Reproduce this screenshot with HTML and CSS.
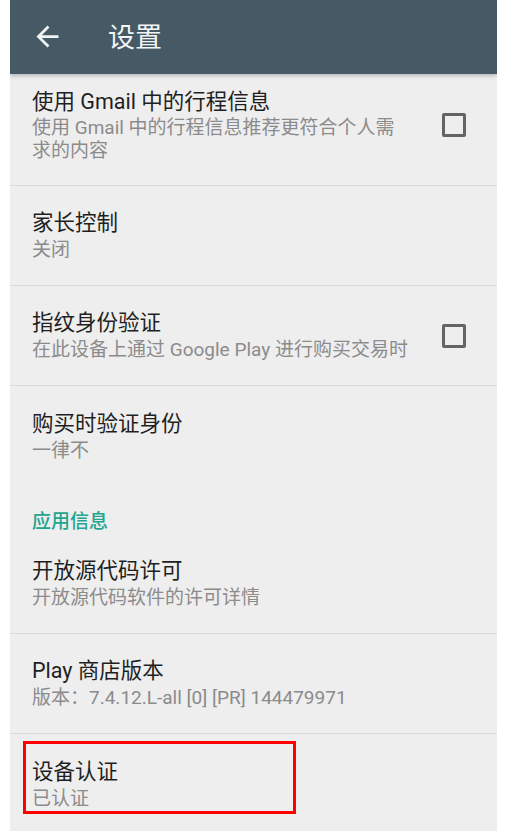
FILE: index.html
```html
<!DOCTYPE html>
<html lang="zh-CN">
<head>
<meta charset="utf-8">
<title>设置</title>
<link rel="stylesheet" href="styles.css">
</head>
<body>
<div class="phone">
  <header class="toolbar">
    <svg class="back" viewBox="0 0 24 24" width="33" height="33"><path d="M20 11H7.83l5.59-5.59L12 4l-8 8 8 8 1.41-1.41L7.83 13H20v-2z" fill="#f2f4f5"/></svg>
    <h1 class="title">设置</h1>
  </header>
  <div class="list">
    <div class="item first divided">
      <div class="text">
        <div class="primary">使用 Gmail 中的行程信息</div>
        <div class="secondary">使用 Gmail 中的行程信息推荐更符合个人需求的内容</div>
      </div>
      <span class="checkbox"></span>
    </div>
    <div class="item divided">
      <div class="text">
        <div class="primary">家长控制</div>
        <div class="secondary">关闭</div>
      </div>
    </div>
    <div class="item divided">
      <div class="text">
        <div class="primary">指纹身份验证</div>
        <div class="secondary">在此设备上通过 Google Play 进行购买交易时</div>
      </div>
      <span class="checkbox"></span>
    </div>
    <div class="item">
      <div class="text">
        <div class="primary">购买时验证身份</div>
        <div class="secondary">一律不</div>
      </div>
    </div>
    <div class="category">应用信息</div>
    <div class="item divided">
      <div class="text">
        <div class="primary">开放源代码许可</div>
        <div class="secondary">开放源代码软件的许可详情</div>
      </div>
    </div>
    <div class="item divided">
      <div class="text">
        <div class="primary">Play 商店版本</div>
        <div class="secondary">版本：7.4.12.L-all [0] [PR] 144479971</div>
      </div>
    </div>
    <div class="item highlighted">
      <div class="text">
        <div class="primary">设备认证</div>
        <div class="secondary">已认证</div>
      </div>
      <span class="mark"></span>
    </div>
  </div>
</div>
</body>
</html>
```
FILE: styles.css
```css
* { box-sizing: border-box; }
html, body { margin: 0; padding: 0; background: #ffffff; }
body {
  font-family: Roboto, "Noto Sans CJK SC", sans-serif;
}
.phone {
  margin-left: 10px;
  width: 487px;
  height: 831px;
  background: #eeeeee;
  overflow: hidden;
  display: flex;
  flex-direction: column;
}
.toolbar {
  position: relative;
  z-index: 2;
  height: 74px;
  flex: 0 0 74px;
  background: #455a64;
  display: flex;
  align-items: center;
  padding-left: 21px;
  box-shadow: 0 2px 4px rgba(0,0,0,0.22);
}
.back { display: block; flex: 0 0 auto; margin-top: -1px; }
.title {
  margin: -4px 0 0 44px;
  font-size: 27px;
  font-weight: 400;
  color: #f3f5f6;
  line-height: 1;
  font-family: "Noto Sans CJK SC", sans-serif;
}
.list {
  position: relative;
  z-index: 1;
  flex: 1;
}
.item {
  position: relative;
  display: flex;
  align-items: center;
  min-height: 100px;
  padding: 23px 31px 23px 22px;
}
.item.first { margin-top: -9px; padding-bottom: 23px; }
.item.divided { border-bottom: 1px solid #d9d9d9; }
.text { flex: 1; min-width: 0; }
.primary {
  font-size: 21.5px;
  line-height: 28px;
  color: #1f1f1f;
}
.secondary {
  font-size: 19px;
  line-height: 25px;
  color: #8b8b8b;
}
.item.first .secondary { line-height: 23px; }
.checkbox {
  flex: 0 0 24px;
  width: 24px;
  height: 24px;
  margin-left: 31px;
  border: 3px solid #646464;
  border-radius: 2px;
}
.category {
  padding: 24px 22px 0;
  font-size: 19px;
  line-height: 24px;
  font-weight: 500;
  color: #23a48f;
}
.mark {
  position: absolute;
  top: 7px;
  left: 13px;
  width: 273px;
  height: 73px;
  border: 3px solid #ff0000;
}
```
